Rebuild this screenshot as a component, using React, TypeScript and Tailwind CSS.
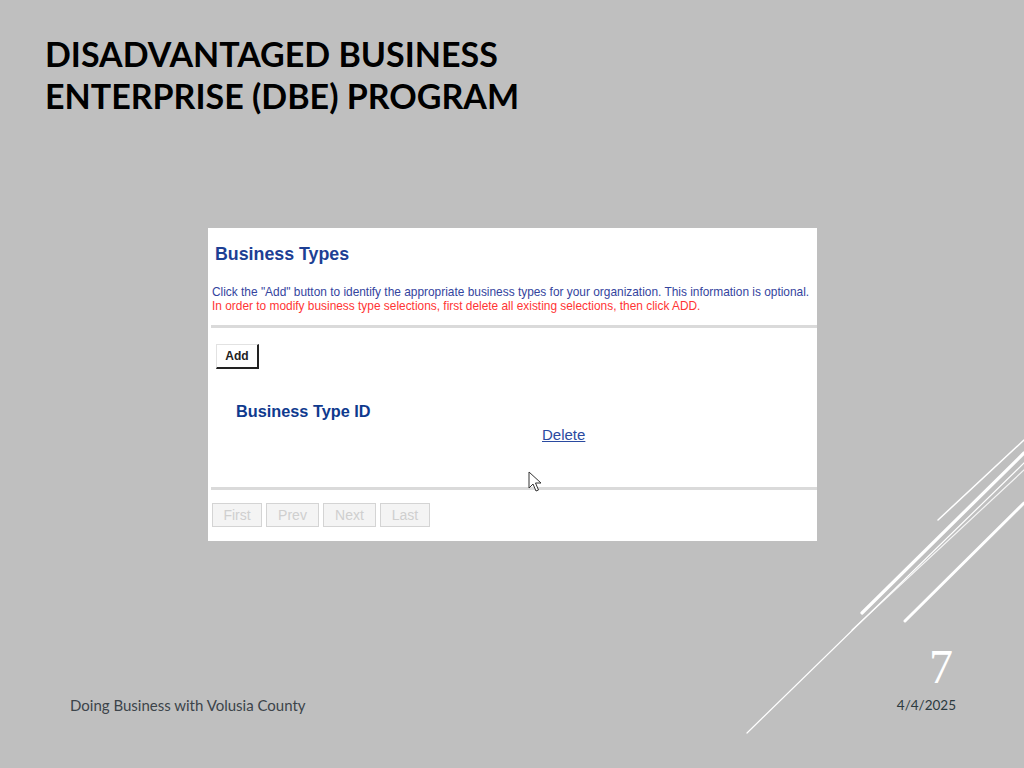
import React from 'react'

const NAV_BTN =
  'flex h-[24px] items-center justify-center border border-[#d4d4d4] bg-[#f4f4f4] text-[14px] text-[#cfcfcf]'

function SliceLines() {
  return (
    <svg className="pointer-events-none absolute inset-0" width="1024" height="768" viewBox="0 0 1024 768">
      <g stroke="#ffffff" strokeLinecap="round">
        <line x1="747" y1="733" x2="1024" y2="463" strokeWidth="1.2" />
        <line x1="852" y1="630" x2="1024" y2="470" strokeWidth="1.2" opacity="0.85" />
        <line x1="862" y1="613" x2="1024" y2="453" strokeWidth="3.2" />
        <line x1="938" y1="520" x2="1024" y2="440" strokeWidth="1.5" />
        <line x1="905" y1="621" x2="1024" y2="503" strokeWidth="3" />
      </g>
    </svg>
  )
}

function Cursor() {
  return (
    <svg width="15" height="22" viewBox="0 0 15 22" className="absolute left-[320px] top-[243px]">
      <path
        d="M1 1 L1 17 L5 13 L8 20 L10.5 19 L7.5 12 L13 12 Z"
        fill="#ffffff"
        stroke="#333333"
        strokeWidth="1"
        strokeLinejoin="round"
      />
    </svg>
  )
}

function BusinessTypesShot() {
  return (
    <div className="relative ml-[208px] mt-[111px] flex h-[313px] w-[609px] flex-col bg-white font-['Liberation_Sans',Arial,sans-serif]">
      <h2 className="ml-[7px] mt-[16px] text-[17.8px] leading-[20px] font-bold text-[#1d3f94]">Business Types</h2>
      <div className="ml-[4px] mt-[21px] text-[11.9px] leading-[14px]">
        <p className="text-[#34449e]">
          Click the "Add" button to identify the appropriate business types for your organization. This information is optional.
        </p>
        <p className="text-[#ff3434]">
          In order to modify business type selections, first delete all existing selections, then click ADD.
        </p>
      </div>
      <div className="ml-[3px] mt-[12px] h-[3px] bg-[#dadada]" />
      <div className="ml-[8px] mt-[16px]">
        <button className="flex h-[25px] w-[43px] items-center justify-center border border-r-2 border-b-2 border-[#e2e2e2] border-r-[#222] border-b-[#222] bg-white text-[12px] font-bold text-[#222]">
          Add
        </button>
      </div>
      <div className="ml-[28px] mt-[34px] text-[16.3px] leading-[16px] font-bold text-[#0f3a8e]">Business Type ID</div>
      <div className="ml-[334px] mt-[8px] text-[15px] leading-[16px] text-[#2a4aa0] underline">Delete</div>
      <div className="ml-[3px] mt-[44px] h-[3px] bg-[#dadada]" />
      <div className="ml-[4px] mt-[13px] flex gap-[4px]">
        <div className={`${NAV_BTN} w-[50px]`}>First</div>
        <div className={`${NAV_BTN} w-[53px]`}>Prev</div>
        <div className={`${NAV_BTN} w-[53px]`}>Next</div>
        <div className={`${NAV_BTN} w-[50px]`}>Last</div>
      </div>
      <Cursor />
    </div>
  )
}

export default function App() {
  return (
    <div className="relative flex h-[768px] w-[1024px] flex-col overflow-hidden bg-[#bfbfbf]">
      <SliceLines />
      <h1 className="ml-[45px] mt-[33px] font-['Lato',sans-serif] text-[34px] leading-[42px] font-bold text-black">
        DISADVANTAGED BUSINESS
        <br />
        ENTERPRISE (DBE) PROGRAM
      </h1>
      <BusinessTypesShot />
      <div className="relative mt-auto mb-[55px] flex items-end justify-between pl-[70px] pr-[68px] font-['Lato',sans-serif]">
        <span className="text-[15px] leading-[16px] text-[#3c444a]">Doing Business with Volusia County</span>
        <div className="flex flex-col items-end">
          <span className="mr-[3px] font-['Liberation_Serif',serif] text-[48px] leading-[48px] font-light text-white">7</span>
          <span className="mt-[6px] text-[13.5px] leading-[16px] text-[#2c3a40]">4/4/2025</span>
        </div>
      </div>
    </div>
  )
}
